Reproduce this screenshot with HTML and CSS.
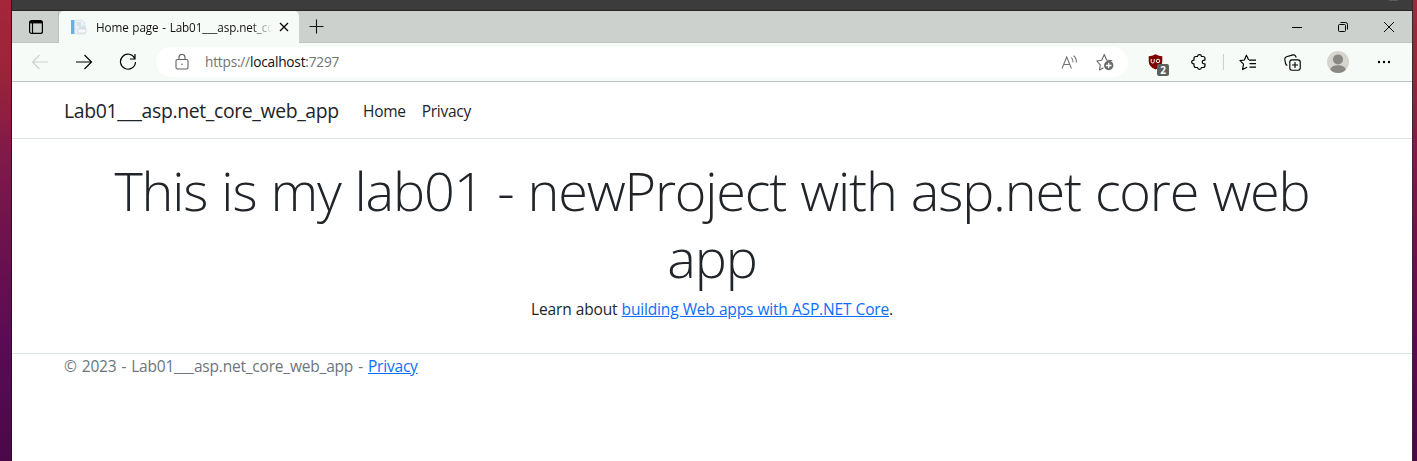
FILE: index.html
```html
<!DOCTYPE html>
<html lang="en">
<head>
<meta charset="utf-8">
<title>Home page - Lab01___asp.net_core_web_app</title>
<link rel="stylesheet" href="styles.css">
</head>
<body>
<div class="desktop">
  <div class="window">
    <div class="behind"><span class="knob"></span></div>
    <div class="tabstrip">
      <div class="tab-actions">
        <svg width="16" height="16" viewBox="0 0 16 16" fill="none" stroke="#000" stroke-width="1.2"><rect x="1.6" y="1.6" width="12.8" height="12.8" rx="2"/><path d="M2 3.200h12" stroke-width="2.400"/><path d="M4.500 4v10"/></svg>
      </div>
      <div class="tab">
        <svg class="favicon" width="16" height="16" viewBox="0 0 16 16"><path d="M0 1h3.500v14H0z" fill="#65b1e4"/><path d="M4 1h7l3 3v11H4z" fill="#edf1f4" stroke="#d5dce2" stroke-width=".7"/><path d="M6 3h4v4H6zM8 7h7v3H8z" fill="#d6e2ea"/><path d="M7 10h8v4H7z" fill="#f8f9fb" stroke="#c9d2da" stroke-width=".7"/></svg>
        <span class="tab-title">Home page - Lab01___asp.net_cc</span>
        <svg class="tab-close" width="10" height="10" viewBox="0 0 10 10" stroke="#000" stroke-width="1.3"><path d="M1 1l8 8M9 1L1 9"/></svg>
      </div>
      <svg class="new-tab" width="15" height="15" viewBox="0 0 15 15" stroke="#111" stroke-width="1.1"><path d="M7.5.5v14M.5 7.5h14"/></svg>
      <div class="controls">
        <svg width="12" height="12" viewBox="0 0 12 12" stroke="#000"><path d="M1 6.5h10"/></svg>
        <svg width="12" height="12" viewBox="0 0 12 12" fill="none" stroke="#000"><rect x="1.5" y="3.5" width="7" height="7" rx="1"/><path d="M3.5 1.5h5q2 0 2 2v5"/></svg>
        <svg width="12" height="12" viewBox="0 0 12 12" stroke="#000"><path d="M1 1l10 10M11 1L1 11"/></svg>
      </div>
    </div>
    <div class="toolbar">
      <svg class="back" width="18" height="16" viewBox="0 0 18 16" fill="none" stroke="#cdd1ce" stroke-width="1.1"><path d="M17 8H1.5M8.5 1L1.5 8l7 7"/></svg>
      <svg class="forward" width="18" height="16" viewBox="0 0 18 16" fill="none" stroke="#000" stroke-width="1.2"><path d="M1 8h15.5M9.500 1l7 7-7 7"/></svg>
      <svg class="reload" width="18" height="18" viewBox="0 0 18 18" fill="none" stroke="#000" stroke-width="1.2"><path d="M15.800 5.500A7.500 7.500 0 1 0 16.500 9M16 1v5h-5"/></svg>
      <div class="address">
        <svg width="14" height="16" viewBox="0 0 14 16" fill="none" stroke="#5f6361" stroke-width="1.100"><rect x="1" y="5.500" width="12" height="9.500" rx="1.500"/><path d="M4 5.500V3.500a3 3 0 0 1 6 0v2"/><circle cx="7" cy="10.200" r=".8" fill="#5f6361" stroke="none"/></svg>
        <span class="url">https://<b>localhost</b>:7297</span>
        <svg class="read" width="17" height="15" viewBox="0 0 17 15" fill="none" stroke="#757575" stroke-width="1.100"><path d="M1 13.500L5.700 2l4.700 11.500M2.600 9.500h6.200M10.300 2.700q2 1.700 1.700 4.600M12.500.700q3.300 2.500 2.800 6.800"/></svg>
        <svg class="fav" width="18" height="18" viewBox="0 0 18 18" fill="none" stroke="#666a68" stroke-width="1.100"><path d="M7.500 14.800l-4 2.200.8-5.200L.800 8l4.900-.8L8.300 1.500l2.300 5.500 5.700.8" stroke-linejoin="round"/><circle cx="12.700" cy="12.500" r="4.700" fill="#666a68" stroke="none"/><path d="M12.700 9.700v5.600M9.900 12.500h5.600" stroke="#fff" stroke-width="1.300"/></svg>
      </div>
      <div class="ublock">
        <svg width="15" height="16" viewBox="0 0 15 16"><path d="M7.500.300Q4 2.300.700 2.300v5q0 5.500 6.800 8.200 6.800-2.700 6.800-8.200v-5Q11 2.300 7.500.300z" fill="#800000"/><path d="M3.200 5v2.500q0 1.500 1.500 1.500t1.500-1.500V5M10 5.200a1.700 1.700 0 1 1 0 3.500 1.700 1.700 0 0 1 0-3.500z" fill="none" stroke="#fff"/></svg>
        <span class="count">2</span>
      </div>
      <svg class="puzzle" width="16" height="16" viewBox="0 0 16 16" fill="none" stroke="#000" stroke-width="1.200" stroke-linejoin="round"><path d="M5 2.500h1.500Q6.700.700 8.500.700t2 1.800H12q2 0 2 2v1.600q-2.700-.3-2.700 1.900T14 9.900v1.600q0 2-2 2h-1.500q-.2 1.800-2 1.800t-2-1.800H5q-2 0-2-2V9.900Q.700 9.800.700 8T3 6.100V4.500q0-2 2-2z"/></svg>
      <span class="divider"></span>
      <svg class="favorites" width="18" height="17" viewBox="0 0 18 17" fill="none" stroke="#000" stroke-width="1.150" stroke-linejoin="round"><path d="M9.700 6L7.400 1.200 5.400 6 1 6.600l3.500 3.500-.9 5.500 4.500-2.400M10 6.100h7M10.500 9.600h6.500M10.500 13.100h6.500"/></svg>
      <svg class="collections" width="17" height="17" viewBox="0 0 17 17" fill="none" stroke="#000" stroke-width="1.150"><rect x="5.800" y="5.800" width="10.400" height="10.400" rx="2.200"/><path d="M11 8v6M8 11h6M3.300 11.600Q2 11 1.600 9.500L.8 5.500Q.600 3.400 2.500 2.700L9 .9q1.900-.4 2.700 1.300l.5 1.300"/></svg>
      <svg class="avatar" width="22" height="22" viewBox="0 0 22 22"><defs><clipPath id="face"><circle cx="11" cy="11" r="11"/></clipPath></defs><g clip-path="url(#face)"><path d="M0 0h22v22H0z" fill="#d5d4cf"/><circle cx="11" cy="8.400" r="5" fill="#898883"/><ellipse cx="11" cy="19" rx="7.800" ry="4.800" fill="#898883"/></g></svg>
      <svg class="more" width="14" height="4" viewBox="0 0 14 4"><circle cx="2" cy="2" r="1.200"/><circle cx="7" cy="2" r="1.200"/><circle cx="12" cy="2" r="1.200"/></svg>
    </div>
    <div class="page">
      <header class="navbar">
        <a class="brand">Lab01___asp.net_core_web_app</a>
        <a class="nav-link">Home</a>
        <a class="nav-link">Privacy</a>
      </header>
      <main class="main">
        <h1 class="display">This is my lab01 - newProject with asp.net core web app</h1>
        <p class="lead">Learn about <a class="link">building Web apps with ASP.NET Core</a>.</p>
      </main>
      <footer class="footer">© 2023 - Lab01___asp.net_core_web_app - <a class="link">Privacy</a></footer>
    </div>
  </div>
</div>
</body>
</html>
```
FILE: styles.css
```css
* { box-sizing: border-box; }
body { margin: 0; font-family: "Open Sans", "Noto Sans", sans-serif; color: #212529; }
svg { display: block; flex: none; }
.desktop { height: 461px; padding: 0 4px 0 11px; overflow: hidden; background: linear-gradient(#a5263a 0, #9b2439 70px, #811a48 150px, #6d124d 240px, #5b0b55 340px, #4a0849 461px); }
.window { height: 461px; display: flex; flex-direction: column; border-left: 1px solid #25131f; border-right: 1px solid #3a2630; background: #fff; }
.behind { height: 11px; flex: none; background: #3c3c3c; border-bottom: 1px solid #262626; display: flex; justify-content: flex-end; padding-right: 14px; overflow: hidden; }
.knob { width: 9px; height: 1px; border-radius: 0 0 5px 5px; background: #5c5c5c; }
.tabstrip { height: 32px; flex: none; display: flex; align-items: center; background: #cdd1ce; border-bottom: 1px solid #c1c5c2; }
.tab-actions { width: 47px; height: 32px; padding-left: 16px; display: flex; align-items: center; border-radius: 0 0 4px 0; border-right: 1px solid #bcc0bd; }
.tab { width: 240px; height: 32px; padding: 0 10px 0 12px; margin-bottom: -1px; display: flex; align-items: center; background: #f7fbf8; border-radius: 5px 5px 0 0; }
.tab-title { width: 176px; margin-left: 9px; padding-bottom: 1px; white-space: nowrap; font-size: 11.7px; letter-spacing: -0.1px; word-spacing: 0.8px; color: #111; -webkit-mask-image: linear-gradient(90deg, #000 155px, transparent 176px); mask-image: linear-gradient(90deg, #000 155px, transparent 176px); }
.tab-close { margin-left: 7px; }
.new-tab { margin-left: 10px; }
.controls { margin-left: auto; padding-right: 17px; display: flex; gap: 34px; }
.toolbar { height: 39px; flex: none; display: flex; align-items: center; padding-left: 19px; background: #f7fbf8; border-bottom: 1px solid #bdc3c0; }
.forward { margin-left: 26px; }
.reload { margin-left: 26px; }
.address { width: 972px; height: 30px; margin-left: 19px; padding: 0 14px 0 19px; display: flex; align-items: center; border-radius: 15px; background: #fff; }
.url { flex: 1; margin-left: 16px; padding-bottom: 1px; font-size: 13.7px; letter-spacing: -0.22px; color: #6f7371; white-space: nowrap; }
.url b { font-weight: 400; color: #111; }
.fav { margin-left: 18px; }
.ublock { position: relative; margin-left: 20px; }
.count { position: absolute; left: 9px; top: 10px; width: 12px; height: 12px; border-radius: 2px; background: #5c605e; color: #fff; font-size: 10px; font-weight: 700; line-height: 12px; text-align: center; }
.puzzle { margin-left: 28px; }
.divider { width: 1px; height: 16px; margin-left: 16px; background: #ccd0cd; }
.favorites { margin-left: 15px; }
.collections { margin-left: 27px; }
.avatar { margin-left: 26px; }
.more { margin-left: 28px; }
.page { flex: 1; font-size: 15.5px; line-height: 24px; }
.navbar { height: 57px; display: flex; align-items: center; padding: 1px 0 0 52px; border-bottom: 1px solid #dee5e5; white-space: nowrap; }
.brand { width: 299px; font-size: 19.4px; letter-spacing: -0.35px; }
.nav-link { margin-right: 16px; letter-spacing: -0.27px; }
.main { margin-top: 16px; height: 198px; padding: 0 52px; text-align: center; }
.display { margin: 0; padding: 2px 0 6px; font-size: 54px; font-weight: 300; letter-spacing: -1.18px; word-spacing: 1.2px; line-height: 67.2px; }
.lead { margin: 0; letter-spacing: -0.17px; word-spacing: 0.4px; }
.link { color: #0d6efd; text-decoration: underline; }
.footer { border-top: 1px solid #dee5e5; padding-left: 52px; letter-spacing: -0.2px; word-spacing: 1.2px; color: #6c757d; white-space: nowrap; }
```
